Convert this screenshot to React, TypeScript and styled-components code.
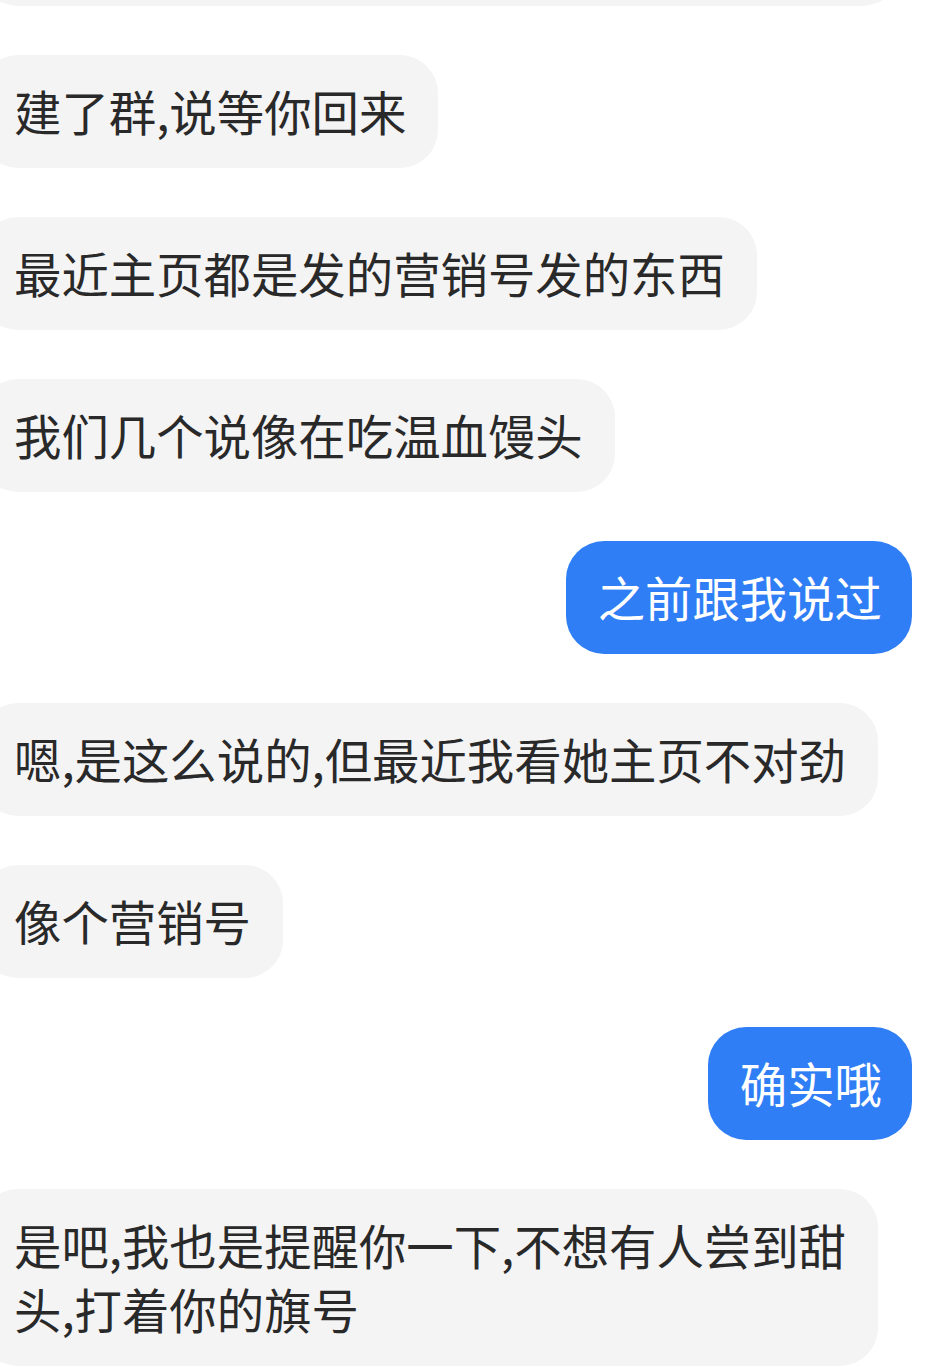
import React from 'react';
import styled, { createGlobalStyle } from 'styled-components';

const GlobalStyle = createGlobalStyle`
  html, body {
    margin: 0;
    padding: 0;
    background: #ffffff;
    overflow: hidden;
  }
  body {
    font-family: "Noto Sans CJK SC", "Noto Sans", sans-serif;
  }
`;

const Thread = styled.div`
  display: flex;
  flex-direction: column;
  gap: 49px;
  padding: 0 25px 0 0;
  width: 937px;
  height: 1367px;
  box-sizing: border-box;
  overflow: hidden;
`;

const Bubble = styled.div<{ $mine?: boolean }>`
  align-self: ${(p) => (p.$mine ? 'flex-end' : 'flex-start')};
  margin-left: ${(p) => (p.$mine ? '0' : '-20px')};
  max-width: 930px;
  box-sizing: border-box;
  padding: 24px ${(p) => (p.$mine ? '30px 25px 32px' : '32px 25px 34px')};
  border-radius: 38px;
  background: ${(p) => (p.$mine ? '#2f7ef5' : '#f4f4f5')};
  color: ${(p) => (p.$mine ? '#ffffff' : '#292929')};
  font-size: 47.4px;
  line-height: 64px;
  white-space: pre-wrap;
`;

const Stub = styled(Bubble)`
  width: 920px;
  height: 113px;
  margin-top: -107px;
  flex-shrink: 0;
`;

type Msg = { mine?: boolean; text: string };

const messages: Msg[] = [
  { text: '建了群,说等你回来' },
  { text: '最近主页都是发的营销号发的东西' },
  { text: '我们几个说像在吃温血馒头' },
  { mine: true, text: '之前跟我说过' },
  { text: '嗯,是这么说的,但最近我看她主页不对劲' },
  { text: '像个营销号' },
  { mine: true, text: '确实哦' },
  { text: '是吧,我也是提醒你一下,不想有人尝到甜\n头,打着你的旗号' },
];

const App: React.FC = () => {
  return (
    <>
      <GlobalStyle />
      <Thread>
        <Stub />
        {messages.map((m, i) => (
          <Bubble key={i} $mine={m.mine}>
            {m.text}
          </Bubble>
        ))}
      </Thread>
    </>
  );
};

export default App;
